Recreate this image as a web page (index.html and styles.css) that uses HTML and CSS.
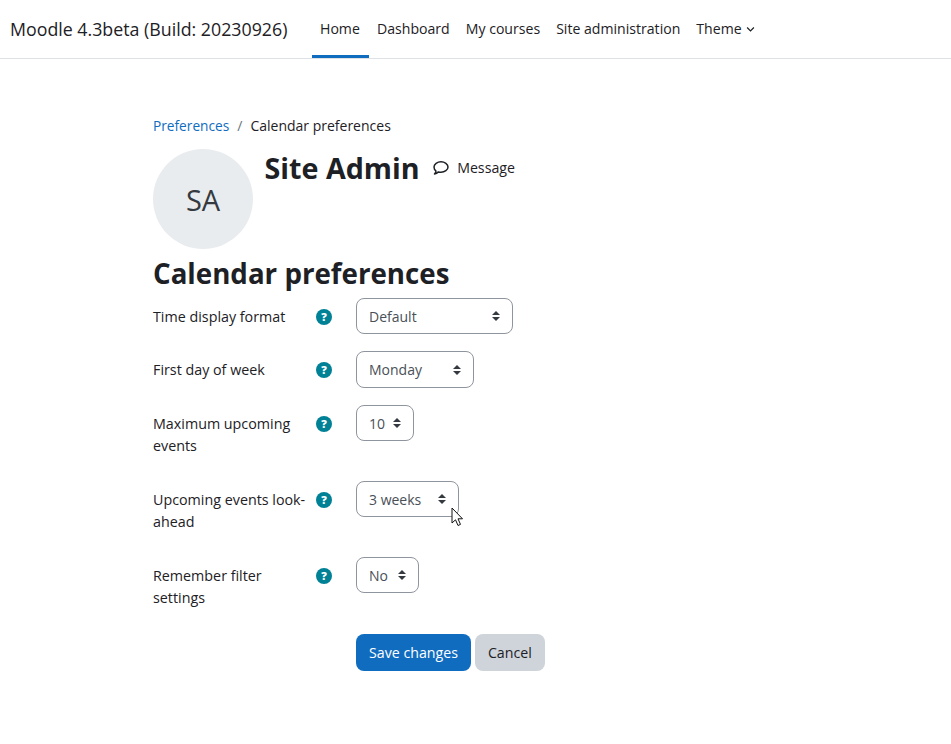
FILE: index.html
```html
<!DOCTYPE html>
<html lang="en">
<head>
<meta charset="utf-8">
<title>Calendar preferences</title>
<link rel="stylesheet" href="styles.css">
</head>
<body>
<nav class="navbar">
  <span class="brand">Moodle 4.3beta (Build: 20230926)</span>
  <ul class="nav">
    <li class="nav-item active">Home</li>
    <li class="nav-item">Dashboard</li>
    <li class="nav-item">My courses</li>
    <li class="nav-item">Site administration</li>
    <li class="nav-item">Theme
      <svg class="caret" viewBox="0 0 8 6" width="9" height="7"><path d="M1 1.200 4 4.200 7 1.200" fill="none" stroke="#1d2125" stroke-width="1.100"/></svg>
    </li>
  </ul>
</nav>
<main class="page">
  <div class="breadcrumb"><a class="crumb-link">Preferences</a><span class="crumb-sep">/</span><span>Calendar preferences</span></div>
  <header class="user-head">
    <div class="avatar">SA</div>
    <div class="user-name">Site Admin</div>
    <div class="message">
      <svg viewBox="0 0 16 16" width="16" height="16"><path d="M8 1.800c3.700 0 7 2.200 7 5.200s-3.300 5.200-7 5.200c-.9 0-1.700-.1-2.500-.3C4.600 12.800 3.300 13.800 1.500 14c.8-.9 1.400-2 1.500-3C1.700 10 1 8.600 1 7c0-3 3.300-5.200 7-5.200z" fill="none" stroke="#1d2125" stroke-width="1.500" stroke-linejoin="round"/></svg>
      <span>Message</span>
    </div>
  </header>
  <h2 class="title">Calendar preferences</h2>
  <form class="form">
    <div class="row row-a">
      <div class="label">Time display format</div>
      <div class="help">?</div>
      <div class="select w-default"><span>Default</span><svg class="updown" viewBox="0 0 8 10" width="8" height="10"><path d="M4 0 8 4H0zM4 10 0 6H8z" fill="#343a40"/></svg></div>
    </div>
    <div class="row row-b">
      <div class="label">First day of week</div>
      <div class="help">?</div>
      <div class="select w-monday"><span>Monday</span><svg class="updown" viewBox="0 0 8 10" width="8" height="10"><path d="M4 0 8 4H0zM4 10 0 6H8z" fill="#343a40"/></svg></div>
    </div>
    <div class="row row-c">
      <div class="label">Maximum upcoming events</div>
      <div class="help">?</div>
      <div class="select w-ten"><span>10</span><svg class="updown" viewBox="0 0 8 10" width="8" height="10"><path d="M4 0 8 4H0zM4 10 0 6H8z" fill="#343a40"/></svg></div>
    </div>
    <div class="row row-c">
      <div class="label">Upcoming events look-ahead</div>
      <div class="help">?</div>
      <div class="select w-weeks"><span>3 weeks</span><svg class="updown" viewBox="0 0 8 10" width="8" height="10"><path d="M4 0 8 4H0zM4 10 0 6H8z" fill="#343a40"/></svg>
        <svg class="cursor" viewBox="0 0 13 20" width="13" height="20"><path d="M1 1V16L4.500 12.800 7 18.500 9.500 17.400 7 11.800H11.500z" fill="#fff" stroke="#111" stroke-width="1"/></svg>
      </div>
    </div>
    <div class="row row-d">
      <div class="label">Remember filter settings</div>
      <div class="help">?</div>
      <div class="select w-no"><span>No</span><svg class="updown" viewBox="0 0 8 10" width="8" height="10"><path d="M4 0 8 4H0zM4 10 0 6H8z" fill="#343a40"/></svg></div>
    </div>
    <div class="actions">
      <button type="button" class="btn btn-primary">Save changes</button>
      <button type="button" class="btn btn-secondary">Cancel</button>
    </div>
  </form>
</main>
</body>
</html>
```
FILE: styles.css
```css
* { box-sizing: border-box; }
html, body { margin: 0; padding: 0; }
body {
  background: #fff;
  color: #1d2125;
  font-family: "Open Sans", "Noto Sans", sans-serif;
  font-size: 14px;
  line-height: 22px;
  height: 744px;
  overflow: hidden;
}
.navbar {
  display: flex;
  align-items: stretch;
  height: 59px;
  padding-left: 10px;
  border-bottom: 1px solid #dee2e6;
}
.brand { font-size: 17.8px; align-self: center; line-height: 26px; width: 302px; flex: none; }
.nav { display: flex; list-style: none; margin: 0; padding: 0; font-size: 14.1px; }
.nav-item {
  display: flex;
  align-items: center;
  gap: 4px;
  padding: 3px 8px 0;
  height: 58px;
  border-bottom: 3px solid transparent;
}
.nav-item.active { border-bottom-color: #0f6cbf; width: 57px; }
.page { padding: 56px 0 0 153px; }
.breadcrumb { display: flex; height: 22px; align-items: center; }
.crumb-link { color: #0f6cbf; font-size: 13.7px; }
.crumb-sep { color: #6a737b; padding: 0 8px; }
.user-head { display: flex; align-items: flex-start; margin-top: 12px; height: 100px; }
.avatar {
  width: 100px; height: 100px; border-radius: 50%;
  background: #e9ecef; color: #343a40;
  display: flex; align-items: center; justify-content: center;
  font-size: 29px; flex: none; padding-top: 2px;
}
.user-name { font-size: 28.7px; font-weight: 700; line-height: 36px; margin: 1px 0 0 11.500px; }
.message { display: flex; align-items: center; gap: 8px; margin: 8px 0 0 13.500px; font-size: 14.2px; }
.title { font-size: 27.7px; font-weight: 700; line-height: 36px; margin: 6px 0 7px; }
.row { display: flex; align-items: flex-start; }
.row-a { height: 53px; }
.row-b { height: 54px; }
.row-c { height: 76px; }
.row-d { height: 77px; }
.label { width: 163px; padding: 8px 8px 0 0; flex: none; font-size: 14.3px; }
.help {
  width: 16px; height: 16px; border-radius: 50%;
  background: #008196; color: #fff;
  font-size: 11px; font-weight: 800; line-height: 16px; text-align: center;
  margin-top: 11px; flex: none;
}
.select {
  position: relative;
  display: flex; align-items: center; justify-content: space-between;
  height: 36px; margin-left: 24px;
  padding: 0 12px;
  border: 1px solid #8f959e; border-radius: 8px;
  color: #495057;
}
.select span { padding-top: 2px; }
.row-b .select { height: 37px; }
.row-b .select span { padding-top: 0; }
.w-default { width: 157px; }
.w-monday { width: 118px; }
.w-ten { width: 58px; }
.w-weeks { width: 103px; }
.w-no { width: 63px; }
.updown { flex: none; }
.cursor { position: absolute; left: 94px; top: 25px; }
.actions { display: flex; gap: 4px; padding-left: 203px; }
.btn {
  font: inherit; font-size: 14.2px; height: 37px; border: 0; border-radius: 8px; padding: 0 13px;
}
.btn-primary { background: #0f6cbf; color: #fff; }
.btn-secondary { background: #ced4da; color: #1d2125; }
```
